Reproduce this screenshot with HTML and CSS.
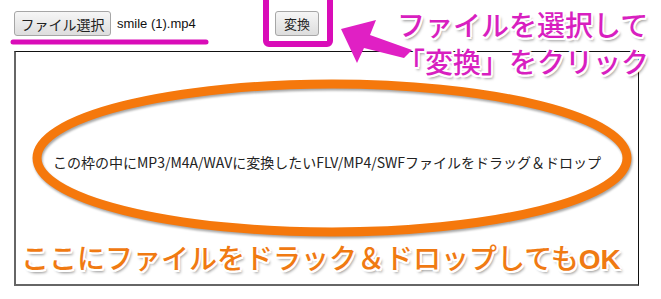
FILE: index.html
```html
<!DOCTYPE html>
<html lang="ja">
<head>
  <meta charset="UTF-8" />
  <title>FLV変換</title>
  <link rel="stylesheet" href="styles.css">
</head>
<body>

  <div class="page">
    <!-- File select + convert -->
    <div class="toolbar">
      <div class="file-field">
        <button class="btn file-btn">ファイル選択</button>
        <span class="file-name">smile (1).mp4</span>
      </div>
      <button class="btn convert-btn">変換</button>
    </div>

    <!-- Drop zone -->
    <div class="dropzone">
      <p class="drop-text">この枠の中にMP3/M4A/WAVに変換したいFLV/MP4/SWFファイルをドラッグ＆ドロップ</p>
    </div>
  </div>

  <!-- Annotations drawn over the page -->
  <svg class="marks" width="661" height="299" viewBox="0 0 661 299">
    <ellipse class="ring" cx="332" cy="158" rx="295" ry="74" />
    <line class="underline" x1="13" y1="42" x2="206" y2="42" />
    <rect class="box" x="266" y="-3" width="64" height="47" rx="3" />
    <polygon class="arrow" points="341,29 376,20 370,35 412,50 404,58 364,48 357,63" />
  </svg>

  <div class="note note-pink">ファイルを選択して<br>「変換」をクリック</div>
  <div class="note note-orange">ここにファイルをドラック＆ドロップしても<b>OK</b></div>

</body>
</html>
```

FILE: styles.css
```css
body {
  margin: 0;
  background: #fff;
  font-family: "Liberation Sans", Arial, sans-serif;
  overflow: hidden;
}

.page {
  padding: 11px 0 0 14px;
}

.toolbar {
  display: flex;
  align-items: center;
  height: 25px;
}

.file-field {
  display: flex;
  align-items: center;
  width: 261px;
}

.btn {
  height: 25px;
  padding: 0 4px;
  font-family: "Noto Sans CJK JP", sans-serif;
  font-size: 14px;
  color: #222;
  white-space: nowrap;
  background: linear-gradient(#f6f6f6, #dddddd);
  border: 1px solid #a6a6a6;
  border-radius: 3px;
}

.file-btn {
  width: 97px;
}

.convert-btn {
  width: 44px;
  font-size: 13px;
}

.file-name {
  margin-left: 6px;
  font-size: 13px;
  color: #111;
}

.dropzone {
  margin-top: 15px;
  width: 622px;
  height: 232px;
  border: 1px solid #111;
  border-left: 2px solid #666;
  border-bottom: 2px solid #666;
  display: flex;
  align-items: center;
  justify-content: center;
}

.drop-text {
  margin: 0 0 12px;
  font-family: "Noto Sans CJK JP", sans-serif;
  font-size: 14px;
  color: #222;
}

/* annotations */
.marks {
  position: absolute;
  top: 0;
  left: 0;
}

.ring {
  fill: none;
  stroke: #f5780c;
  stroke-width: 9;
  filter: drop-shadow(1px 2px 1px rgba(0, 0, 0, 0.35));
}

.underline {
  stroke: #d90cb8;
  stroke-width: 5;
  stroke-linecap: round;
}

.box {
  fill: none;
  stroke: #d90cb8;
  stroke-width: 6;
}

.arrow {
  fill: #e020c4;
}

.note {
  position: absolute;
  font-family: "Noto Sans CJK JP", sans-serif;
  font-size: 28px;
  font-weight: 500;
  white-space: nowrap;
  text-shadow:
    2px 0 0 #fff, -2px 0 0 #fff, 0 2px 0 #fff, 0 -2px 0 #fff,
    1.5px 1.5px 0 #fff, -1.5px 1.5px 0 #fff, 1.5px -1.5px 0 #fff, -1.5px -1.5px 0 #fff,
    2px 3px 3px rgba(0, 0, 0, 0.45);
}

.note-pink {
  left: 397px;
  top: 6px;
  line-height: 37px;
  color: #d81fc0;
}

.note-orange {
  left: 21px;
  top: 238px;
  line-height: 38px;
  color: #f07a12;
}

.note-orange b {
  font-family: "Liberation Sans", Arial, sans-serif;
  font-weight: 700;
}
```
